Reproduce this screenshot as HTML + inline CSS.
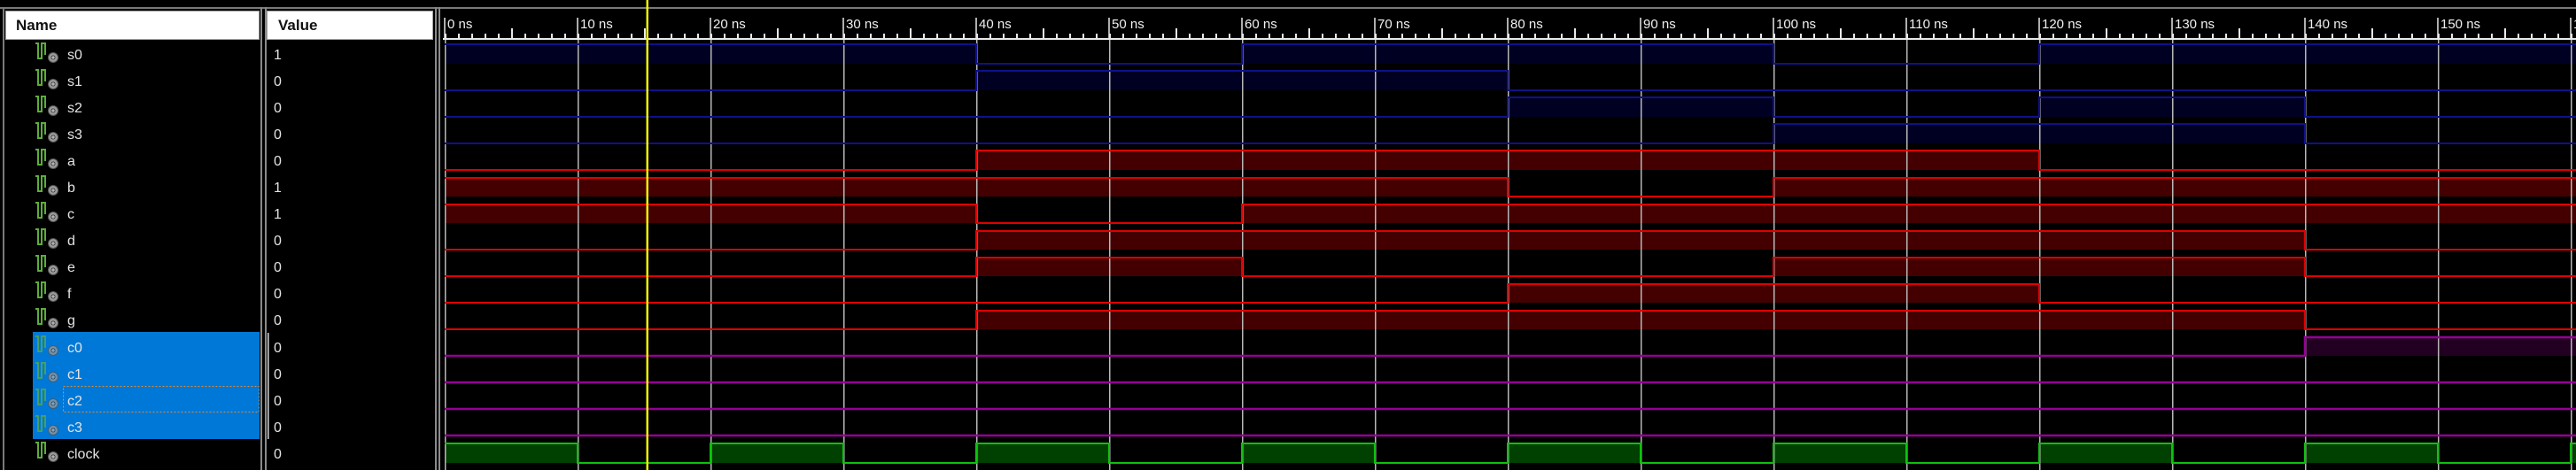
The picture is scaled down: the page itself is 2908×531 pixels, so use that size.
<!DOCTYPE html>
<html><head><meta charset="utf-8"><style>
html,body{margin:0;padding:0;background:#000;overflow:hidden;width:2908px;height:531px;}
svg{display:block;}
text{font-family:"Liberation Sans",sans-serif;}
</style></head><body>
<svg width="2908" height="531" viewBox="0 0 2908 531" xmlns="http://www.w3.org/2000/svg">
<defs>
<pattern id="mt" x="502" y="0" width="15" height="531" patternUnits="userSpaceOnUse"><rect x="0" y="0" width="2" height="531" fill="#e8e8e8"/></pattern>
<pattern id="ht" x="577" y="0" width="150" height="531" patternUnits="userSpaceOnUse"><rect x="0" y="0" width="2" height="531" fill="#e8e8e8"/></pattern>
<pattern id="gl" x="502" y="0" width="150" height="531" patternUnits="userSpaceOnUse"><rect x="0" y="0" width="1.5" height="531" fill="#b8b8b8"/></pattern>
<g id="ic"><path d="M40 -12 H43 V5 H47 V-12 H51 V1" fill="none" stroke="#5cae3c" stroke-width="2"/><circle cx="60" cy="4" r="5.5" fill="#9a9a9a" stroke="#555" stroke-width="1"/><circle cx="60" cy="4" r="2.5" fill="#333"/><path d="M58 4 H62 M60 2 V6" stroke="#ddd" stroke-width="1"/></g>
</defs>
<rect width="2908" height="531" fill="#000"/>
<rect x="0" y="8" width="2908" height="2" fill="#7a7a7a"/>
<rect x="3" y="8" width="2" height="523" fill="#7a7a7a"/>
<rect x="294" y="8" width="2" height="523" fill="#8a8a8a"/>
<rect x="299" y="8" width="2" height="523" fill="#8a8a8a"/>
<rect x="491" y="8" width="2" height="523" fill="#8a8a8a"/>
<rect x="495" y="8" width="2" height="523" fill="#8a8a8a"/>
<rect x="6.5" y="12.5" width="286" height="32" fill="#fff" stroke="#a0a0a0"/>
<rect x="301.5" y="12.5" width="187" height="32" fill="#fff" stroke="#a0a0a0"/>
<text x="18" y="34" font-size="17" font-weight="bold" fill="#111">Name</text>
<text x="314" y="34" font-size="17" font-weight="bold" fill="#111">Value</text>
<rect x="37" y="375" width="256" height="121" fill="#0078d7"/>
<rect x="71.5" y="436.5" width="221" height="29" fill="none" stroke="#e08a30" stroke-width="1" stroke-dasharray="2,2"/>
<rect x="302" y="376" width="1.5" height="120" fill="#ddd"/>
<g font-size="16" fill="#e4e4e4">
<g transform="translate(0,61)"><use href="#ic"/><text x="76" y="6">s0</text><text x="309" y="6">1</text></g>
<g transform="translate(0,91)"><use href="#ic"/><text x="76" y="6">s1</text><text x="309" y="6">0</text></g>
<g transform="translate(0,121)"><use href="#ic"/><text x="76" y="6">s2</text><text x="309" y="6">0</text></g>
<g transform="translate(0,151)"><use href="#ic"/><text x="76" y="6">s3</text><text x="309" y="6">0</text></g>
<g transform="translate(0,181)"><use href="#ic"/><text x="76" y="6">a</text><text x="309" y="6">0</text></g>
<g transform="translate(0,211)"><use href="#ic"/><text x="76" y="6">b</text><text x="309" y="6">1</text></g>
<g transform="translate(0,241)"><use href="#ic"/><text x="76" y="6">c</text><text x="309" y="6">1</text></g>
<g transform="translate(0,271)"><use href="#ic"/><text x="76" y="6">d</text><text x="309" y="6">0</text></g>
<g transform="translate(0,301)"><use href="#ic"/><text x="76" y="6">e</text><text x="309" y="6">0</text></g>
<g transform="translate(0,331)"><use href="#ic"/><text x="76" y="6">f</text><text x="309" y="6">0</text></g>
<g transform="translate(0,361)"><use href="#ic"/><text x="76" y="6">g</text><text x="309" y="6">0</text></g>
<g transform="translate(0,392)" opacity="0.75"><use href="#ic"/></g><text x="76" y="398">c0</text><text x="309" y="398">0</text>
<g transform="translate(0,422)" opacity="0.75"><use href="#ic"/></g><text x="76" y="428">c1</text><text x="309" y="428">0</text>
<g transform="translate(0,452)" opacity="0.75"><use href="#ic"/></g><text x="76" y="458">c2</text><text x="309" y="458">0</text>
<g transform="translate(0,482)" opacity="0.75"><use href="#ic"/></g><text x="76" y="488">c3</text><text x="309" y="488">0</text>
<g transform="translate(0,512)"><use href="#ic"/></g><text x="76" y="518">clock</text><text x="309" y="518">0</text>
</g>
<rect x="500" y="43" width="2408" height="2" fill="#e8e8e8"/>
<rect x="502" y="38" width="2406" height="6" fill="url(#mt)"/>
<rect x="502" y="32" width="2406" height="12" fill="url(#ht)"/>
<path d="M502 20V44M652 20V44M802 20V44M952 20V44M1102 20V44M1252 20V44M1402 20V44M1552 20V44M1702 20V44M1852 20V44M2002 20V44M2152 20V44M2302 20V44M2452 20V44M2602 20V44M2752 20V44M2902 20V44" stroke="#e8e8e8" stroke-width="1.5"/>
<g font-size="15" fill="#f0f0f0">
<text x="505" y="32">0 ns</text><text x="655" y="32">10 ns</text><text x="805" y="32">20 ns</text><text x="955" y="32">30 ns</text><text x="1105" y="32">40 ns</text><text x="1255" y="32">50 ns</text><text x="1405" y="32">60 ns</text><text x="1555" y="32">70 ns</text><text x="1705" y="32">80 ns</text><text x="1855" y="32">90 ns</text><text x="2005" y="32">100 ns</text><text x="2155" y="32">110 ns</text><text x="2305" y="32">120 ns</text><text x="2455" y="32">130 ns</text><text x="2605" y="32">140 ns</text><text x="2755" y="32">150 ns</text><text x="2905" y="32">160 ns</text>
</g>
<g fill="#000022">
<rect x="502" y="50" width="600" height="22"/><rect x="1402" y="50" width="600" height="22"/><rect x="2302" y="50" width="606" height="22"/>
<rect x="1102" y="80" width="600" height="22"/>
<rect x="1702" y="110" width="300" height="22"/><rect x="2302" y="110" width="300" height="22"/>
<rect x="2002" y="140" width="600" height="22"/>
</g>
<g fill="#440000">
<rect x="1102" y="170" width="1200" height="22"/>
<rect x="502" y="201" width="1200" height="21"/><rect x="2002" y="201" width="906" height="21"/>
<rect x="502" y="231" width="600" height="21"/><rect x="1402" y="231" width="1506" height="21"/>
<rect x="1102" y="261" width="1500" height="21"/>
<rect x="1102" y="291" width="300" height="21"/><rect x="2002" y="291" width="600" height="21"/>
<rect x="1702" y="321" width="600" height="21"/>
<rect x="1102" y="351" width="1500" height="21"/>
</g>
<rect x="2602" y="381" width="306" height="21" fill="#220022"/>
<g fill="#004000">
<rect x="502" y="501" width="150" height="22"/><rect x="802" y="501" width="150" height="22"/><rect x="1102" y="501" width="150" height="22"/><rect x="1402" y="501" width="150" height="22"/><rect x="1702" y="501" width="150" height="22"/><rect x="2002" y="501" width="150" height="22"/><rect x="2302" y="501" width="150" height="22"/><rect x="2602" y="501" width="150" height="22"/><rect x="2902" y="501" width="6" height="22"/>
</g>
<rect x="502" y="45" width="2406" height="486" fill="url(#gl)"/>
<g fill="none" stroke-width="2">
<g stroke="#10108c">
<path d="M502 50 H1102 V72 H1402 V50 H2002 V72 H2302 V50 H2908"/>
<path d="M502 102 H1102 V80 H1702 V102 H2908"/>
<path d="M502 132 H1702 V110 H2002 V132 H2302 V110 H2602 V132 H2908"/>
<path d="M502 162 H2002 V140 H2602 V162 H2908"/>
</g>
<g stroke="#e00000">
<path d="M502 192 H1102 V170 H2302 V192 H2908"/>
<path d="M502 201 H1702 V222 H2002 V201 H2908"/>
<path d="M502 231 H1102 V252 H1402 V231 H2908"/>
<path d="M502 282 H1102 V261 H2602 V282 H2908"/>
<path d="M502 312 H1102 V291 H1402 V312 H2002 V291 H2602 V312 H2908"/>
<path d="M502 342 H1702 V321 H2302 V342 H2908"/>
<path d="M502 372 H1102 V351 H2602 V372 H2908"/>
</g>
<g stroke="#960096" stroke-width="2.5">
<path d="M502 402 H2602 V381 H2908"/>
<path d="M502 432 H2908"/>
<path d="M502 462 H2908"/>
<path d="M502 492 H2908"/>
</g>
<path stroke="#10c010" d="M502 501 H652 V523 H802 V501 H952 V523 H1102 V501 H1252 V523 H1402 V501 H1552 V523 H1702 V501 H1852 V523 H2002 V501 H2152 V523 H2302 V501 H2452 V523 H2602 V501 H2752 V523 H2902 V501 H2908"/>
</g>
<rect x="729.5" y="0" width="2.5" height="531" fill="#f0f000"/>
</svg>
</body></html>
